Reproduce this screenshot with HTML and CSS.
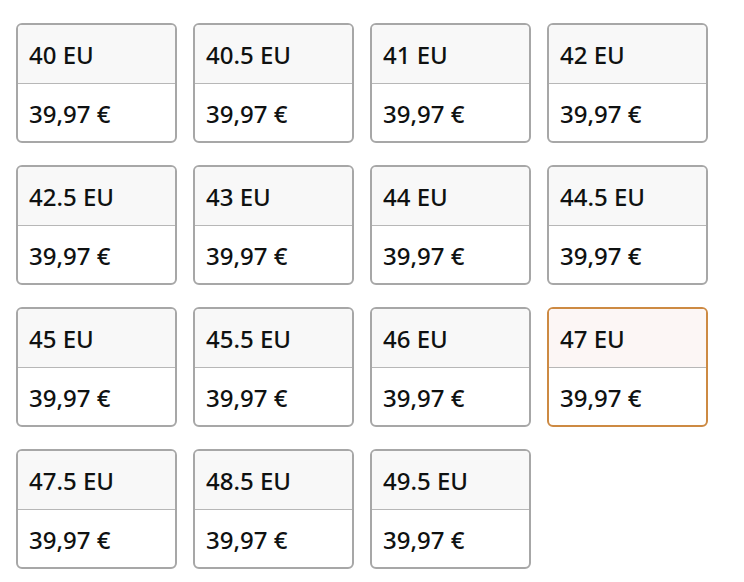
FILE: index.html
```html
<!DOCTYPE html>
<html lang="de">
<head>
<meta charset="utf-8">
<link rel="stylesheet" href="styles.css">
</head>
<body>
<div class="grid">
  <div class="card"><div class="size">40 EU</div><div class="price">39,97 €</div></div>
  <div class="card"><div class="size">40.5 EU</div><div class="price">39,97 €</div></div>
  <div class="card"><div class="size">41 EU</div><div class="price">39,97 €</div></div>
  <div class="card"><div class="size">42 EU</div><div class="price">39,97 €</div></div>
  <div class="card"><div class="size">42.5 EU</div><div class="price">39,97 €</div></div>
  <div class="card"><div class="size">43 EU</div><div class="price">39,97 €</div></div>
  <div class="card"><div class="size">44 EU</div><div class="price">39,97 €</div></div>
  <div class="card"><div class="size">44.5 EU</div><div class="price">39,97 €</div></div>
  <div class="card"><div class="size">45 EU</div><div class="price">39,97 €</div></div>
  <div class="card"><div class="size">45.5 EU</div><div class="price">39,97 €</div></div>
  <div class="card"><div class="size">46 EU</div><div class="price">39,97 €</div></div>
  <div class="card selected"><div class="size">47 EU</div><div class="price">39,97 €</div></div>
  <div class="card"><div class="size">47.5 EU</div><div class="price">39,97 €</div></div>
  <div class="card"><div class="size">48.5 EU</div><div class="price">39,97 €</div></div>
  <div class="card"><div class="size">49.5 EU</div><div class="price">39,97 €</div></div>
</div>
</body>
</html>
```
FILE: styles.css
```css
html, body {
  margin: 0;
  padding: 0;
  background: #ffffff;
}
body {
  font-family: "Noto Sans", "Open Sans", sans-serif;
  color: #0f1111;
}
.grid {
  display: grid;
  grid-template-columns: repeat(4, 161px);
  grid-auto-rows: 120px;
  column-gap: 16px;
  row-gap: 22px;
  padding: 23px 0 0 16px;
}
.card {
  box-sizing: border-box;
  border: 2px solid #a7a7a7;
  border-radius: 6px;
  overflow: hidden;
  display: flex;
  flex-direction: column;
  background: #fff;
}
.size {
  box-sizing: border-box;
  height: 59px;
  background: #f8f8f8;
  border-bottom: 1px solid #b7b7b7;
  display: flex;
  align-items: center;
  padding-left: 11px;
  font-size: 24px;
  font-weight: 500;
}
.price {
  flex: 1;
  display: flex;
  align-items: center;
  padding: 2px 0 0 11px;
  font-size: 24px;
  font-weight: 500;
}
.selected {
  border-color: #cd8a43;
}
.selected .size {
  background: #fcf6f5;
}
```
